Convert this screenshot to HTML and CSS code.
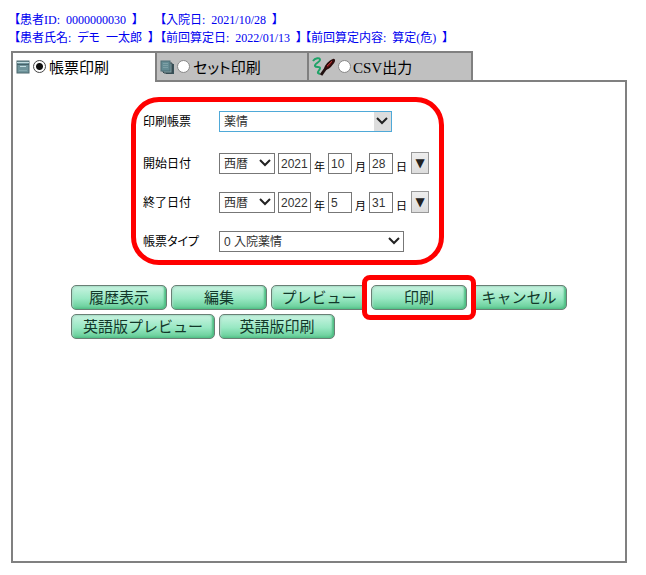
FILE: index.html
```html
<!DOCTYPE html>
<html lang="ja">
<head>
  <meta charset="utf-8" />
  <meta name="viewport" content="width=device-width, initial-scale=1.0">
  <title>帳票印刷</title>
  <link rel="stylesheet" href="styles.css">
</head>

<body>
  <header class="patient">
    <div class="patient-row">
      <span class="patient-id">【患者ID:&nbsp; 0000000030&nbsp; 】</span>
      <span>【入院日:&nbsp; 2021/10/28&nbsp; 】</span>
    </div>
    <div class="patient-row">
      <span class="patient-name">【患者氏名:&nbsp; デモ&nbsp; 一太郎&nbsp; 】</span>
      <span class="patient-date">【前回算定日:&nbsp; 2022/01/13&nbsp; 】</span>
      <span>【前回算定内容:&nbsp; 算定(危)&nbsp; 】</span>
    </div>
  </header>

  <main>
    <!-- Tabs -->
    <div class="tabs">
      <label class="tab tab-active">
        <svg class="tab-icon" width="14" height="14" viewBox="0 0 14 14">
          <rect x="1" y="1" width="12" height="12" fill="#6f949b" stroke="#4d686e" />
          <path d="M1 2.500h12" stroke="#c3dce0" />
          <path d="M1 4.500h12" stroke="#46626a" />
          <path d="M4 6.500h6" stroke="#c3dce0" />
          <path d="M3 10.500h8" stroke="#86a9af" />
        </svg>
        <input type="radio" name="mode" checked>
        <span>帳票印刷</span>
      </label>
      <label class="tab tab-set">
        <svg class="tab-icon" width="14" height="14" viewBox="0 0 14 14">
          <path d="M5 4h9v10H6L5 12z" fill="#385158" />
          <path d="M3 3h9v10H4L3 12z" fill="#82a0a4" stroke="#34474c" />
          <rect x="1" y="1" width="9" height="10" fill="#648b93" stroke="#4e6d74" />
          <path d="M3 3.500h5M3 5.500h5M3 7.500h5" stroke="#7da0a6" />
        </svg>
        <input type="radio" name="mode">
        <span>セット印刷</span>
      </label>
      <label class="tab tab-csv">
        <svg class="tab-icon" width="24" height="19" viewBox="0 0 24 19">
          <path d="M1 4C3 1 8 0 8 3C8 5 2 7 3 9C4 11 8 9 8 11C8 14 5 14 6 16L8 17" fill="none" stroke="#1fa368" stroke-width="2" />
          <path d="M9 18L14 11" stroke="#201010" stroke-width="3" />
          <path d="M13 12C13 9 18 4 21 3C23 2 22 5 20 7C18 10 15 12 13 12z" fill="#7c1717" stroke="#2c0c0c" stroke-width="2" />
          <path d="M15 9L20 4" stroke="#b03636" />
        </svg>
        <input type="radio" name="mode">
        <span>CSV出力</span>
      </label>
    </div>

    <div class="panel">
      <!-- Print conditions -->
      <form class="conditions" id="printForm">
        <div class="form-row">
          <label class="form-label" for="report">印刷帳票</label>
          <select id="report" class="select-report">
            <option>薬情</option>
          </select>
        </div>
        <div class="form-row">
          <label class="form-label" for="startEra">開始日付</label>
          <select id="startEra" class="select-era">
            <option>西暦</option>
          </select>
          <input type="text" id="startYear" class="input-year" value="2021">
          <label class="unit" for="startYear">年</label>
          <input type="text" id="startMonth" class="input-day" value="10">
          <label class="unit" for="startMonth">月</label>
          <input type="text" id="startDay" class="input-day" value="28">
          <label class="unit" for="startDay">日</label>
          <button type="button" class="btn-calendar" aria-label="開始日付">▼</button>
        </div>
        <div class="form-row">
          <label class="form-label" for="endEra">終了日付</label>
          <select id="endEra" class="select-era">
            <option>西暦</option>
          </select>
          <input type="text" id="endYear" class="input-year" value="2022">
          <label class="unit" for="endYear">年</label>
          <input type="text" id="endMonth" class="input-day" value="5">
          <label class="unit" for="endMonth">月</label>
          <input type="text" id="endDay" class="input-day" value="31">
          <label class="unit" for="endDay">日</label>
          <button type="button" class="btn-calendar" aria-label="終了日付">▼</button>
        </div>
        <div class="form-row">
          <label class="form-label" for="reportType">帳票タイプ</label>
          <select id="reportType" class="select-type">
            <option>0 入院薬情</option>
          </select>
        </div>
      </form>

      <!-- Actions -->
      <div class="actions">
        <div class="action-row">
          <button type="button" class="btn">履歴表示</button>
          <button type="button" class="btn">編集</button>
          <button type="button" class="btn">プレビュー</button>
          <button type="button" class="btn btn-marked">印刷</button>
          <button type="button" class="btn">キャンセル</button>
        </div>
        <div class="action-row">
          <button type="button" class="btn btn-wide">英語版プレビュー</button>
          <button type="button" class="btn btn-medium">英語版印刷</button>
        </div>
      </div>
    </div>
  </main>
</body>
</html>
```
FILE: styles.css
```css
* {
  box-sizing: border-box;
}

body {
  display: flex;
  flex-direction: column;
  min-height: 100vh;
  margin: 0;
  padding: 11px 19px 12px 11px;
  background: #fff;
  color: #000;
  font-family: "Liberation Serif", "Noto Sans CJK JP", serif;
  font-size: 12px;
  font-feature-settings: "palt";
}

/* Patient header */
.patient {
  padding-left: 3px;
  color: #0000f0;
  line-height: 18px;
  white-space: nowrap;
}

.patient-row {
  display: flex;
}

.patient-id,
.patient-name {
  width: 146px;
}

.patient-date {
  width: 145px;
}

main {
  display: flex;
  flex-direction: column;
  flex: 1;
  margin-top: 4px;
}

/* Tabs */
.tabs {
  display: flex;
  margin-bottom: -2px;
}

.tab {
  z-index: 1;
  display: flex;
  align-items: center;
  gap: 3px;
  width: 152px;
  height: 31px;
  padding: 0 3px;
  border: 2px solid #808080;
  border-left-width: 0;
  background: #c0c0c0;
  font-size: 15px;
  white-space: nowrap;
}

.tab-active {
  width: 146px;
  padding: 0 3px 2px;
  border-left-width: 2px;
  border-bottom: 0;
  background: #fff;
}

.tab-csv {
  gap: 2px;
  width: 164px;
}

.tab-icon {
  flex: none;
}

.tab input {
  appearance: none;
  flex: none;
  width: 13px;
  height: 13px;
  margin: 0;
  border: 1px solid #888;
  border-radius: 50%;
  background: #fff;
}

.tab input:checked {
  border-color: #444;
  background: radial-gradient(circle, #111 3px, #fff 4px);
}

.panel {
  flex: 1;
  padding: 15px 8px;
  border: 2px solid #808080;
}

/* Print conditions */
.conditions {
  display: flex;
  flex-direction: column;
  gap: 17px;
  width: 313px;
  margin-left: 110px;
  padding: 8px 7px;
  border: 5px solid #f00;
  border-radius: 28px;
}

.form-row {
  display: flex;
  align-items: center;
  gap: 3px;
  height: 22px;
}

.form-row:first-child {
  margin-bottom: 3px;
}

.form-label {
  width: 73px;
  white-space: nowrap;
}

.unit {
  width: 11px;
  padding-top: 5px;
  font-size: 11px;
}

select,
input[type="text"] {
  height: 21px;
  margin: 0;
  border: 1px solid #777;
  border-radius: 0;
  background-color: #fff;
  color: #333;
  font-family: "Liberation Sans", "Noto Sans CJK JP", sans-serif;
  font-size: 12px;
}

select {
  appearance: none;
  padding: 2px 4px 0;
  background-image: url("data:image/svg+xml,%3Csvg xmlns='http://www.w3.org/2000/svg' width='17' height='19'%3E%3Cpath d='M3 6L8 11L13 6' fill='none' stroke='%23222' stroke-width='2'/%3E%3C/svg%3E");
  background-repeat: no-repeat;
  background-position: right center;
}

.select-report {
  width: 173px;
  border-color: #4fa9d8;
  background-image: url("data:image/svg+xml,%3Csvg xmlns='http://www.w3.org/2000/svg' width='17' height='19'%3E%3Crect width='17' height='19' fill='%23ddd'/%3E%3Cpath d='M3 6L8 11L13 6' fill='none' stroke='%23222' stroke-width='2'/%3E%3C/svg%3E");
}

.select-era {
  width: 56px;
}

.select-type {
  width: 185px;
}

input[type="text"] {
  padding: 2px 2px 0;
}

.input-year {
  width: 33px;
}

.input-day {
  width: 24px;
}

.btn-calendar {
  width: 18px;
  height: 22px;
  margin-left: 1px;
  padding: 0;
  border: 1px solid #999;
  background: linear-gradient(#eee, #ddd);
  color: #222;
  font-family: "DejaVu Sans", sans-serif;
  font-size: 12px;
}

/* Action buttons */
.actions {
  display: flex;
  flex-direction: column;
  gap: 4px;
  margin: 20px 0 0 50px;
}

.action-row {
  display: flex;
  gap: 4px;
}

.btn {
  position: relative;
  width: 96px;
  height: 25px;
  padding: 0 0 2px;
  border: 1px solid #6a7f75;
  border-radius: 5px;
  background: linear-gradient(#c9f3e1, #98e8c3 55%, #62cb94);
  box-shadow: inset -2px -1px 2px #4fbe84, inset 1px 1px 2px #a8dcc6;
  color: #12382a;
  font-family: "Noto Sans CJK JP", sans-serif;
  font-size: 15px;
  line-height: 20px;
  white-space: nowrap;
}

.btn-wide {
  width: 144px;
}

.btn-medium {
  width: 116px;
}

/* Red frame around the print button, above its neighbours */
.btn-marked {
  z-index: 1;
}

.btn-marked::after {
  content: "";
  position: absolute;
  inset: -11px -10px;
  border: 5px solid #f00;
  border-radius: 8px;
}
```
